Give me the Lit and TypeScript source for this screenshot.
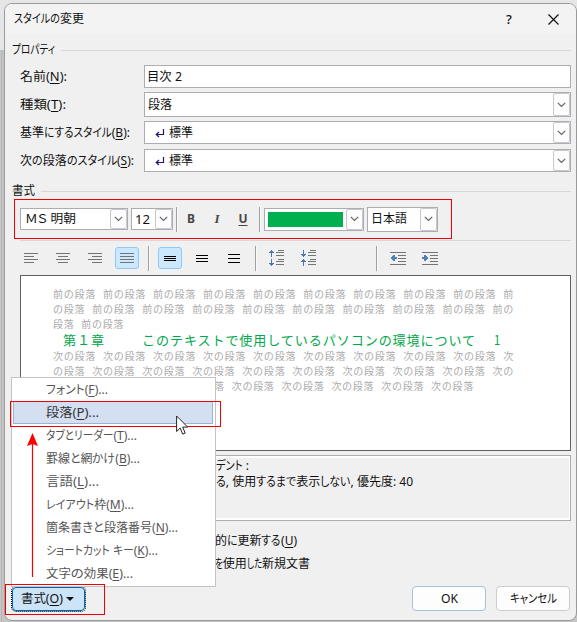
import { LitElement, html, css, svg, nothing } from "lit";
import { customElement, property } from "lit/decorators.js";

/**
 * One line of text fitted to a given width; "&" marks the access key.
 * Kana runs give way first, the way UI fonts with narrow kana set them.
 */
@customElement("fit-text")
class FitText extends LitElement {
  @property() text = "";
  @property({ type: Number }) w = 0;
  @property({ type: Boolean }) even = false;

  static styles = css`
    :host { display: inline-block; flex: none; white-space: pre; }
    .box { display: block; }
    .run { display: inline-block; transform-origin: 0 50%; }
    .tight { font-feature-settings: "palt"; }
    .kana { display: inline-block; transform-origin: 0 50%; }
    u { text-decoration-thickness: 1px; text-underline-offset: 2px; }
  `;

  private runs(s: string) {
    if (this.even) return s;
    return s.split(/([\u3041-\u30ff]+)/).map((p) =>
      /^[\u3041-\u30ff]/.test(p) ? html`<span class="kana">${p}</span>` : p);
  }

  render() {
    const i = this.text.indexOf("&");
    const body = i < 0
      ? this.runs(this.text)
      : html`${this.runs(this.text.slice(0, i))}<u>${this.text[i + 1]}</u>${this.text.slice(i + 2)}`;
    return html`<span class="box" style="width:${this.w}px"><span class="run ${this.even ? "" : "tight"}">${body}</span></span>`;
  }

  updated() {
    const run = this.renderRoot.querySelector(".run") as HTMLElement;
    const kana = [...this.renderRoot.querySelectorAll<HTMLElement>(".kana")];
    for (const el of [run, ...kana]) {
      el.style.transform = "none";
      el.style.marginRight = "0";
    }
    const natural = run.getBoundingClientRect().width;
    if (!natural) return;
    const widths = kana.map((k) => k.getBoundingClientRect().width);
    const total = widths.reduce((a, b) => a + b, 0);
    let now = natural;
    if (total > 0) {
      const s = Math.min(1.08, Math.max(0.68, (this.w - (natural - total)) / total));
      kana.forEach((k, i) => {
        k.style.transform = `scaleX(${s})`;
        k.style.marginRight = `${widths[i] * (s - 1)}px`;
      });
      now = natural - total + total * s;
    }
    run.style.transform = `scaleX(${this.w / now})`;
  }
}

const chevron = html`<span class="drop"><svg width="9" height="6" viewBox="0 0 9 6"><path d="M.8.8 4.5 4.5 8.2.8" fill="none" stroke="#666" stroke-width="1.2"/></svg></span>`;

const lines = (rows: number[][], color: string) =>
  svg`${rows.map(([x, y, w]) => svg`<rect x=${x} y=${y} width=${w} height="1" fill=${color} />`)}`;

const icon = (w: number, h: number, body: unknown) =>
  html`<svg width=${w} height=${h} viewBox="0 0 ${w} ${h}" shape-rendering="crispEdges">${body}</svg>`;

const GREY = "#747474";
const alignLeft = icon(14, 10, lines([[0, 0, 14], [0, 3, 10], [0, 6, 14], [0, 9, 10]], GREY));
const alignCenter = icon(14, 10, lines([[0, 0, 14], [2, 3, 10], [0, 6, 14], [2, 9, 10]], GREY));
const alignRight = icon(14, 10, lines([[0, 0, 14], [4, 3, 10], [0, 6, 14], [4, 9, 10]], GREY));
const alignJustify = icon(14, 10, lines([[0, 0, 14], [0, 3, 14], [0, 6, 14], [0, 9, 14]], GREY));
const spacing = (g: number) =>
  icon(12, 9, lines([[0, 4 - g, 12], [0, 4, 12], [0, 4 + g, 12]], "#000"));

const up = (y: number) => svg`<path d="M2 ${y}h1v1h1v1h1v1h-2v4h-1v-4h-2v-1h1v-1h1z" fill="#4f75b5"/>`;
const down = (y: number) => svg`<path d="M2 ${y}h1v4h2v1h-1v1h-1v1h-1v-1h-1v-1h-1v-1h2z" fill="#4f75b5"/>`;
const paraLines = lines([[9, 0, 6], [7, 2, 8], [7, 5, 8], [9, 9, 6], [7, 11, 8], [7, 14, 8]], GREY);
const spaceMore = icon(15, 16, svg`${up(0)}${down(9)}${paraLines}`);
const spaceLess = icon(15, 16, svg`${down(0)}${up(9)}${paraLines}`);
const indentLines = lines([[0, 0, 16], [8, 3, 8], [8, 6, 8], [8, 9, 8], [0, 12, 16]], GREY);
const outdent = icon(16, 13, svg`${indentLines}<path d="M0 6h1v-1h1v-1h1v-1h2v2h2v2h-2v2h-2v-1h-1v-1h-1v-1h-1z" fill="#4f7fbd"/>`);
const indent = icon(16, 13, svg`${indentLines}<path d="M7 6h-1v-1h-1v-1h-1v-1h-2v2h-2v2h2v2h2v-1h1v-1h1v-1h1z" fill="#4f7fbd"/>`);

const ret = html`<svg class="ret" width="10" height="9" viewBox="0 0 10 9"><path d="M8.5 0v5.5H2M4 3 1.3 5.5 4 8" fill="none" stroke="#1d1670" stroke-width="1.2"/></svg>`;

interface Row { label: string; lw: number; value: string; vw: number; kind: string; mark?: boolean }
const ROWS: Row[] = [
  { label: "名前(&N):", lw: 47, value: "目次 2", vw: 35, kind: "name" },
  { label: "種類(&T):", lw: 46, value: "段落", vw: 24, kind: "type" },
  { label: "基準にするスタイル(&B):", lw: 110, value: "標準", vw: 24, kind: "base", mark: true },
  { label: "次の段落のスタイル(&S):", lw: 114, value: "標準", vw: 24, kind: "next", mark: true },
];

const MENU: [string, number][] = [
  ["フォント(&F)...", 62],
  ["段落(&P)...", 53],
  ["タブとリーダー(&T)...", 91],
  ["罫線と網かけ(&B)...", 94],
  ["言語(&L)...", 53],
  ["レイアウト枠(&M)...", 88],
  ["箇条書きと段落番号(&N)...", 132],
  ["ショートカット キー(&K)...", 112],
  ["文字の効果(&E)...", 87],
];

const BEFORE: [string, number][] = [
  ["前の段落 ".repeat(9) + "前", 461],
  ["の段落 " + "前の段落 ".repeat(8) + "前の", 461],
  ["段落 前の段落", 71],
];
const AFTER: [string, number][] = [
  ["次の段落 ".repeat(9) + "次", 461],
  ["の段落 " + "次の段落 ".repeat(8) + "次の", 461],
];
const LAST: [string, number] = ["落 " + "次の段落 ".repeat(4) + "次の段落", 260];

@customElement("app-root")
class AppRoot extends LitElement {
  static styles = css`
    * { box-sizing: border-box; }
    :host {
      display: block; position: relative; width: 577px; height: 622px; overflow: hidden;
      background: linear-gradient(90deg, #c9c9c9 0 1px, #b4b4b4 1px 2px, #c4c4c4 2px);
      font: 12px/16px "Noto Sans", "Noto Sans CJK JP", sans-serif; color: #111;
    }
    .top { position: absolute; inset: 0 0 auto 0; height: 50px; background: #e6e6e6; }
    svg { display: block; flex: none; }
    .dialog {
      position: absolute; left: 4px; top: 3px; width: 573px; height: 618px;
      border: 1px solid #9a9a9a; border-radius: 8px; background: #f0f0f0;
      display: flex; flex-direction: column; overflow: hidden;
    }
    .title { height: 30px; flex: none; background: #f3f3f3; display: flex; align-items: center; padding: 0 17px 0 9px; }
    .title .q { margin-left: auto; width: 10px; margin-right: 34px; text-align: center; font-size: 13px; font-weight: 500; }
    .section { display: flex; align-items: center; height: 16px; flex: none; gap: 6px; padding: 0 5px 0 7px; }
    .section::after { content: ""; flex: 1; height: 1px; background: #d8d8d8; }
    .s1 { margin-top: 8px; }
    .s2 { margin-top: 11px; }
    .rows { display: flex; flex-direction: column; margin-top: 7px; padding: 0 5px 0 15px; }
    .row { display: grid; grid-template-columns: 124px 1fr; align-items: center; }
    .row.type { margin: 4px 0; }
    .row.next { margin-top: 5px; }
    .field { height: 23px; border: 1px solid #abadb3; background: #fff; display: flex; align-items: center; padding-left: 3px; }
    .name .field { padding-left: 2px; }
    .type .field { height: 25px; }
    .ret { margin: 2px 4px 0 7px; }
    .drop {
      margin-left: auto; width: 17px; height: 100%; flex: none; display: flex; align-items: center; justify-content: center;
      border: 1px solid #c8c8cc; border-radius: 2px; background: #fdfdfd;
    }
    .fmt { margin: 0 0 0 9px; width: 438px; height: 40px; border: 1px solid #f00000; display: flex; align-items: center; padding-left: 5px; flex: none; }
    .combo { border: 1px solid #abadb3; background: #fff; height: 22px; display: flex; align-items: center; flex: none; padding-left: 4px; }
    .font { width: 108px; margin-right: 3px; }
    .size { width: 42px; padding-left: 3px; font-size: 13px; }
    .color { width: 100px; height: 23px; padding-left: 3px; margin-right: 3px; }
    .lang { width: 71px; height: 25px; padding-left: 3px; }
    .swatch { width: 75px; height: 15px; background: #00b050; }
    .sep { width: 1px; height: 25px; background: #a0a0a0; box-shadow: 1px 0 #fafafa; flex: none; }
    .fmt .sep.a { margin: 0 1px 0 3px; }
    .fmt .sep.b { margin: 0 4px 0 3px; }
    .bt { width: 26px; text-align: center; font: bold 12px/16px "Noto Sans", sans-serif; color: #484848; flex: none; }
    .bt.i { font: italic bold 13px/16px "Liberation Serif", serif; }
    .bt.u { text-decoration: underline; text-underline-offset: 2px; }
    .rule { height: 1px; background: #d8d8d8; margin: 1px 5px 0 15px; flex: none; }
    .tools { height: 34px; flex: none; display: flex; align-items: center; padding: 0 0 0 10px; }
    .tool { width: 32px; height: 24px; flex: none; display: grid; place-items: center; }
    .pick { display: grid; place-items: center; width: 24px; height: 22px; background: #cce8ff; border: 1px solid #90c8f6; border-radius: 3px; }
    .sep.t1 { margin: 0 5px; }
    .sep.t2 { margin: 0 4px 0 5px; }
    .sep.t3 { margin: 0 5px 0 52px; }
    .preview {
      margin: 0 5px 0 15px; height: 176px; flex: none; border: 1px solid #606060; background: #fff; padding: 10px 0 0 32px;
      display: flex; flex-direction: column; font: 10px/15px "Noto Sans CJK JP", sans-serif; color: #ababab;
      letter-spacing: .67px; word-spacing: 4px;
    }
    .ln { height: 15px; display: flex; }
    .ln.last { padding-left: 161px; }
    .cur { height: 17px; display: flex; align-items: center; padding-left: 10px; font-size: 13px; letter-spacing: .9px; color: #00a84a; }
    .cur .main { margin: 0 18px 0 37px; }
    .desc {
      margin: 4px 5px 0 15px; height: 66px; flex: none; border: 1px solid #abadb3; padding: 2px 0 0 195px;
      box-shadow: inset 0 2px #fff, inset -1px -2px #fff; display: flex; flex-direction: column;
    }
    .checks { display: flex; flex-direction: column; gap: 7px; margin-top: 12px; padding-left: 210px; }
    .footer { margin-top: 14px; display: flex; align-items: center; padding: 0 6px 0 7px; }
    .btn { width: 74px; height: 25px; border: 1px solid #ccc; border-radius: 4px; background: #fdfdfd; display: flex; align-items: center; justify-content: center; }
    .btn.ok { margin-left: auto; margin-right: 10px; border-color: #a9c0da; }
    .btn.menuBtn { background: #cce4f7; border: 1px solid #0067b8; outline: 1px dotted #000; height: 24px; gap: 3px; width: 73px; padding-right: 2px; }
    .menu {
      position: absolute; left: 11px; top: 377px; width: 205px; height: 210px; background: #fff; border: 1px solid #c3c3c3;
      padding: 0 1px; display: flex; flex-direction: column;
    }
    .item { height: 23px; display: flex; align-items: center; padding-left: 32px; color: #555; border: 1px solid transparent; margin-right: 1px; flex: none; }
    .item.on { background: #d4dff2; border-color: #9cb2d6; color: #333; }
    .mark { position: absolute; border: 1px solid #f00000; }
    .m1 { left: 10px; top: 401px; width: 211px; height: 26px; }
    .m2 { left: 5px; top: 584px; width: 100px; height: 31px; }
    .arrow { position: absolute; left: 27px; top: 433px; }
    .cursor { position: absolute; left: 176px; top: 415px; }
  `;

  row(r: Row) {
    return html`<div class="row ${r.kind}">
      <fit-text .text=${r.label} .w=${r.lw}></fit-text>
      <div class="field">
        ${r.mark ? ret : nothing}<fit-text .text=${r.value} .w=${r.vw}></fit-text>
        ${r.kind === "name" ? nothing : chevron}
      </div>
    </div>`;
  }

  render() {
    const line = ([t, w]: [string, number]) => html`<div class="ln"><fit-text even .text=${t} .w=${w}></fit-text></div>`;
    return html`
      <div class="top"></div>
      <div class="dialog">
        <div class="title">
          <fit-text .text=${"スタイルの変更"} .w=${70}></fit-text>
          <span class="q">?</span>
          <svg width="11" height="11" viewBox="0 0 11 11"><path d="M.5.5l10 10M10.5.5l-10 10" stroke="#111" stroke-width="1.2"/></svg>
        </div>
        <div class="section s1"><fit-text .text=${"プロパティ"} .w=${43}></fit-text></div>
        <div class="rows">${ROWS.map((r) => this.row(r))}</div>
        <div class="section s2"><fit-text .text=${"書式"} .w=${23}></fit-text></div>
        <div class="fmt">
          <div class="combo font"><fit-text .text=${"ＭＳ 明朝"} .w=${51}></fit-text>${chevron}</div>
          <div class="combo size"><fit-text .text=${"12"} .w=${15}></fit-text>${chevron}</div>
          <span class="sep a"></span>
          <span class="bt">B</span><span class="bt i">I</span><span class="bt u">U</span>
          <span class="sep b"></span>
          <div class="combo color"><span class="swatch"></span>${chevron}</div>
          <div class="combo lang"><fit-text .text=${"日本語"} .w=${36}></fit-text>${chevron}</div>
        </div>
        <div class="rule"></div>
        <div class="tools">
          <span class="tool">${alignLeft}</span>
          <span class="tool">${alignCenter}</span>
          <span class="tool">${alignRight}</span>
          <span class="tool"><span class="pick">${alignJustify}</span></span>
          <span class="sep t1"></span>
          <span class="tool"><span class="pick">${spacing(2)}</span></span>
          <span class="tool">${spacing(3)}</span>
          <span class="tool">${spacing(4)}</span>
          <span class="sep t2"></span>
          <span class="tool">${spaceMore}</span>
          <span class="tool">${spaceLess}</span>
          <span class="sep t3"></span>
          <span class="tool">${outdent}</span>
          <span class="tool">${indent}</span>
        </div>
        <div class="preview">
          ${BEFORE.map(line)}
          <div class="cur">
            <fit-text even .text=${"第１章"} .w=${42}></fit-text>
            <fit-text even class="main" .text=${"このテキストで使用しているパソコンの環境について"} .w=${334}></fit-text>
            <fit-text even .text=${"1"} .w=${7}></fit-text>
          </div>
          ${AFTER.map(line)}
          <div class="ln last"><fit-text even .text=${LAST[0]} .w=${LAST[1]}></fit-text></div>
        </div>
        <div class="desc">
          <fit-text .text=${"デント :"} .w=${33}></fit-text>
          <fit-text .text=${"る, 使用するまで表示しない, 優先度: 40"} .w=${197}></fit-text>
        </div>
        <div class="checks">
          <fit-text .text=${"的に更新する(&U)"} .w=${82}></fit-text>
          <fit-text .text=${"を使用した新規文書"} .w=${95}></fit-text>
        </div>
        <div class="footer">
          <div class="btn menuBtn"><fit-text .text=${"書式(&O)"} .w=${42}></fit-text>
            <svg width="8" height="4" viewBox="0 0 8 4"><path d="M0 0h8L4 4z" fill="#111"/></svg></div>
          <div class="btn ok"><fit-text .text=${"OK"} .w=${17}></fit-text></div>
          <div class="btn"><fit-text .text=${"キャンセル"} .w=${47}></fit-text></div>
        </div>
      </div>
      <div class="menu">
        ${MENU.map(([t, w], i) => html`<div class="item ${i === 1 ? "on" : ""}"><fit-text .text=${t} .w=${w}></fit-text></div>`)}
      </div>
      <div class="mark m1"></div>
      <div class="mark m2"></div>
      <svg class="arrow" width="11" height="144" viewBox="0 0 11 144"><path d="M5.5 8v136" stroke="#f00" stroke-width="1.2"/><path d="M5.5 0 11 13 5.5 11 0 13z" fill="#f00"/></svg>
      <svg class="cursor" width="13" height="20" viewBox="0 0 13 20"><path d="M.6 1v15.5l3.6-3.4 2.5 6 2.5-1-2.5-6h5z" fill="#fff" stroke="#222" stroke-width="1"/></svg>
    `;
  }
}
